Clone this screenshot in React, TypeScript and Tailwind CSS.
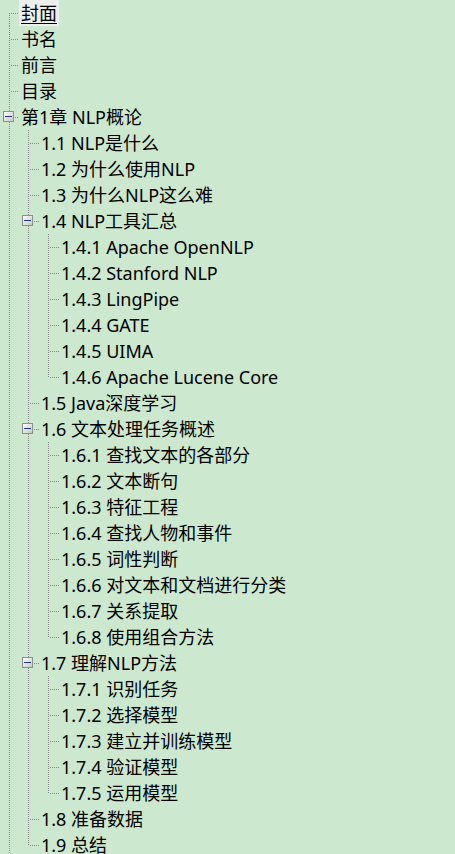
import React from 'react';

type Node = { label: string; children?: Node[]; selected?: boolean };

const TREE: Node[] = [
  { label: '封面', selected: true },
  { label: '书名' },
  { label: '前言' },
  { label: '目录' },
  {
    label: '第1章 NLP概论',
    children: [
      { label: '1.1 NLP是什么' },
      { label: '1.2 为什么使用NLP' },
      { label: '1.3 为什么NLP这么难' },
      {
        label: '1.4 NLP工具汇总',
        children: [
          { label: '1.4.1 Apache OpenNLP' },
          { label: '1.4.2 Stanford NLP' },
          { label: '1.4.3 LingPipe' },
          { label: '1.4.4 GATE' },
          { label: '1.4.5 UIMA' },
          { label: '1.4.6 Apache Lucene Core' },
        ],
      },
      { label: '1.5 Java深度学习' },
      {
        label: '1.6 文本处理任务概述',
        children: [
          { label: '1.6.1 查找文本的各部分' },
          { label: '1.6.2 文本断句' },
          { label: '1.6.3 特征工程' },
          { label: '1.6.4 查找人物和事件' },
          { label: '1.6.5 词性判断' },
          { label: '1.6.6 对文本和文档进行分类' },
          { label: '1.6.7 关系提取' },
          { label: '1.6.8 使用组合方法' },
        ],
      },
      {
        label: '1.7 理解NLP方法',
        children: [
          { label: '1.7.1 识别任务' },
          { label: '1.7.2 选择模型' },
          { label: '1.7.3 建立并训练模型' },
          { label: '1.7.4 验证模型' },
          { label: '1.7.5 运用模型' },
        ],
      },
      { label: '1.8 准备数据' },
      { label: '1.9 总结' },
    ],
  },
  { label: '第2章 NLP基础', children: [] },
];

type Cell = 'pipe' | 'blank' | 'tee' | 'elbow' | 'first';
type Row = { node: Node; cells: Cell[]; expanded: boolean };

// widths of connector columns per depth
const COL_W = [19, 20, 20, 20];

function flatten(nodes: Node[], prefix: Cell[], out: Row[], root: boolean) {
  nodes.forEach((node, i) => {
    const last = i === nodes.length - 1;
    let own: Cell = last ? 'elbow' : 'tee';
    if (root && i === 0) own = 'first';
    out.push({ node, cells: [...prefix, own], expanded: !!node.children && node.children.length > 0 });
    if (node.children && node.children.length > 0) {
      flatten(node.children, [...prefix, last ? 'blank' : 'pipe'], out, false);
    }
  });
}

const ROWS: Row[] = [];
flatten(TREE, [], ROWS, true);

function Connector({ kind, width, box }: { kind: Cell; width: number; box: boolean }) {
  const x = 9.5;
  return (
    <svg width={width} height={26} className="shrink-0 block" shapeRendering="crispEdges">
      {(kind === 'pipe' || kind === 'tee') && (
        <line x1={x} y1={0} x2={x} y2={26} stroke="#8a8a8a" strokeDasharray="1 1" />
      )}
      {kind === 'elbow' && <line x1={x} y1={0} x2={x} y2={14} stroke="#8a8a8a" strokeDasharray="1 1" />}
      {kind === 'first' && <line x1={x} y1={13} x2={x} y2={26} stroke="#8a8a8a" strokeDasharray="1 1" />}
      {kind !== 'pipe' && kind !== 'blank' && (
        <line x1={x + 1} y1={13.5} x2={width} y2={13.5} stroke="#8a8a8a" strokeDasharray="1 1" />
      )}
      {box && (
        <g>
          <defs>
            <linearGradient id="bx" x1="0" y1="0" x2="1" y2="1">
              <stop offset="0" stopColor="#ffffff" />
              <stop offset="1" stopColor="#c6c6c6" />
            </linearGradient>
          </defs>
          <rect x={3.5} y={7.5} width={10} height={10} fill="url(#bx)" stroke="#8e8f8f" />
          <line x1={5} y1={12.5} x2={12} y2={12.5} stroke="#1c3b8f" />
        </g>
      )}
    </svg>
  );
}

export default function App() {
  return (
    <div
      className="h-screen w-full overflow-hidden bg-[#cce8cf] text-black text-[18px]"
      style={{ fontFamily: '"Noto Sans", "Noto Sans CJK SC", sans-serif' }}
    >
      {ROWS.map((row, idx) => (
        <div key={idx} className="flex h-[26px] items-stretch">
          {row.cells.map((c, d) => (
            <Connector
              key={d}
              kind={c}
              width={COL_W[d]}
              box={d === row.cells.length - 1 && row.expanded}
            />
          ))}
          <span
            className={`px-[2px] leading-[26px] whitespace-nowrap ${
              row.node.selected ? 'bg-[#edefed] underline underline-offset-[3px]' : ''
            }`}
          >
            {row.node.label}
          </span>
        </div>
      ))}
    </div>
  );
}
